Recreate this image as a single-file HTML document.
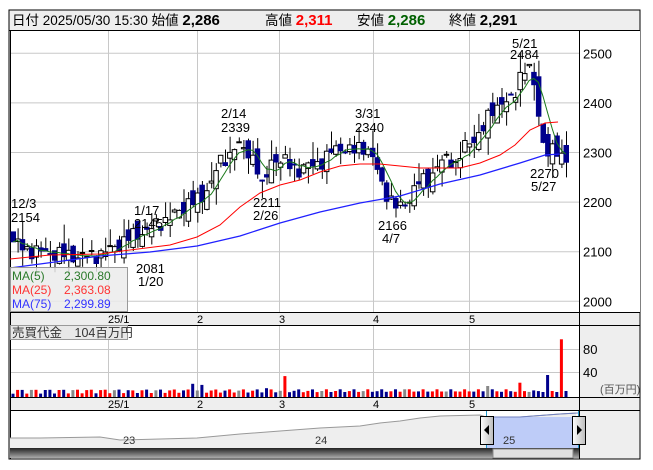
<!DOCTYPE html><html><head><meta charset="utf-8"><style>
body{margin:0;width:653px;height:470px;background:#fff;font-family:"Liberation Sans","Noto Sans CJK JP",sans-serif;overflow:hidden}
</style></head><body>
<svg id="s" width="653" height="470" xmlns="http://www.w3.org/2000/svg" style="position:absolute;left:0;top:0;font-family:'Liberation Sans','Noto Sans CJK JP',sans-serif">
<rect x="9" y="10" width="631" height="449" fill="#eeeeee" stroke="#000"/>
<rect x="10" y="31" width="569" height="281" fill="#fff"/>
<rect x="579" y="31" width="61" height="281" fill="#fff"/>
<rect x="10" y="326" width="569" height="71" fill="#fff"/>
<rect x="10" y="411" width="569" height="37" fill="#fff"/>
<g stroke="#c8c8c8" stroke-width="1" id="grid"></g>
<line x1="9" y1="30.5" x2="640" y2="30.5" stroke="#000"/>
<line x1="10.5" y1="31" x2="10.5" y2="459" stroke="#000"/>
<line x1="579.5" y1="31" x2="579.5" y2="459" stroke="#000"/>
<line x1="10" y1="312.5" x2="640" y2="312.5" stroke="#000"/>
<line x1="10" y1="325.5" x2="640" y2="325.5" stroke="#000"/>
<line x1="10" y1="397.5" x2="640" y2="397.5" stroke="#000"/>
<line x1="10" y1="410.5" x2="640" y2="410.5" stroke="#000"/>
<g id="g"></g>
<text y="25" font-size="13.5"><tspan x="12">日付 2025/05/30 15:30 始値 </tspan><tspan font-weight="bold" font-size="15">2,286</tspan><tspan x="265">高値 </tspan><tspan fill="#f00" font-weight="bold" font-size="15">2,311</tspan><tspan x="357">安値 </tspan><tspan fill="#006000" font-weight="bold" font-size="15">2,286</tspan><tspan x="449">終値 </tspan><tspan font-weight="bold" font-size="15">2,291</tspan></text>
</svg>
<script>
const g=document.getElementById('g'),grid=document.getElementById('grid');
let h='',gh='';
const Y=p=>53.3+(2500-p)*0.496;
[2500,2400,2300,2200,2100,2000].forEach(p=>{gh+=`<line x1="11" x2="579" y1="${Y(p).toFixed(1)}" y2="${Y(p).toFixed(1)}"/>`;});
[108,197,279,373,469].forEach(x=>{gh+=`<line x1="${x}.5" x2="${x}.5" y1="31" y2="312"/><line x1="${x}.5" x2="${x}.5" y1="326" y2="397"/>`;});
[349,372].forEach(y=>{gh+=`<line x1="11" x2="579" y1="${y}.5" y2="${y}.5"/>`;});
grid.innerHTML=gh;
[2500,2400,2300,2200,2100,2000].forEach(p=>{h+=`<text x="583" y="${(Y(p)+5).toFixed(1)}" font-size="13">${p}</text>`;});
h+=`<text x="583" y="354" font-size="13">80</text><text x="583" y="377" font-size="13">40</text><text x="600" y="393" font-size="11" fill="#555">(百万円)</text>`;
[[108,'25/1'],[197,'2'],[279,'3'],[373,'4'],[469,'5']].forEach(([x,t])=>{h+=`<text x="${x}" y="323" font-size="11">${t}</text><text x="${x}" y="408" font-size="11">${t}</text>`;});
const K=[[13,2120],[25,2105],[40,2100],[60,2095],[80,2090],[100,2095],[115,2110],[130,2130],[150,2145],[165,2165],[180,2180],[189,2205],[200,2200],[210,2240],[218,2275],[228,2290],[235,2320],[245,2300],[255,2290],[262,2225],[272,2290],[285,2280],[298,2265],[312,2275],[325,2285],[332,2305],[342,2312],[352,2300],[362,2315],[370,2300],[376,2270],[382,2235],[390,2205],[398,2185],[408,2205],[418,2240],[428,2245],[438,2275],[448,2290],[456,2275],[462,2305],[472,2325],[482,2345],[492,2385],[502,2405],[508,2395],[516,2425],[522,2475],[530,2462],[536,2420],[541,2330],[548,2300],[556,2300],[566,2291]];
function ip(x){for(let i=0;i<K.length-1;i++){if(x<=K[i+1][0]){const [a,b]=K[i],[c,d]=K[i+1];return b+(d-b)*(x-a)/(c-a);}}return K[K.length-1][1];}
const N=121,cl=[],xs=[];
for(let i=0;i<N;i++){const x=13+i*(553/(N-1));xs.push(x);cl.push(ip(x)+Math.sin(i*2.7)*11+Math.sin(i*1.3)*7);}
let vol='';
for(let i=0;i<N;i++){
 const x=xs[i],c=cl[i],o=i?cl[i-1]+Math.sin(i*3.1)*16:2140;
 const hi=Math.max(o,c)+Math.abs(Math.sin(i*5.3))*Math.abs(Math.sin(i*0.7))*40,lo=Math.min(o,c)-Math.abs(Math.sin(i*4.1))*Math.abs(Math.sin(i*0.9))*35;
 const up=c>=o;
 h+=`<line x1="${(x+.5).toFixed(1)}" x2="${(x+.5).toFixed(1)}" y1="${Y(hi).toFixed(1)}" y2="${Y(lo).toFixed(1)}" stroke="#000"/>`;
 const t=Y(Math.max(o,c)),bh=Math.max(1,Math.abs(Y(o)-Y(c)));
 h+=`<rect x="${(x-2).toFixed(1)}" y="${t.toFixed(1)}" width="4.5" height="${bh.toFixed(1)}" fill="${up?'#fff':'#00008c'}" stroke="${up?'#000':'#00008c'}" stroke-width="1"/>`;
 let v=6+Math.abs(Math.sin(i*2.1))*8;
 const big={39:24,41:22,59:38,55:16,110:26,116:40,119:105,103:20,85:14,26:12,113:12};
 if(big[i]!==undefined)v=big[i];
 const vc=i%9==4?'#888':(up?'#f00':'#00008c');
 const vh=v*22/40;
 vol+=`<rect x="${(x-1.5).toFixed(1)}" y="${(397-vh).toFixed(1)}" width="3" height="${vh.toFixed(1)}" fill="${vc}"/>`;
}
h+=vol;
let m5='';for(let i=0;i<N;i++){let s=0,n=0;for(let j=Math.max(0,i-4);j<=i;j++){s+=cl[j];n++;}m5+=`${xs[i].toFixed(1)},${Y(s/n).toFixed(1)} `;}
h+=`<polyline points="${m5}" fill="none" stroke="#1a7a1a" stroke-width="1"/>`;
h+=`<polyline points="10,259 50,255 100,254 130,250 170,245 197,237 220,225 240,207 260,193 280,185 300,180 320,172 340,166 360,164 380,164 400,166 420,168 440,168 460,168 480,163 500,155 515,145 530,130 545,123 558,122" fill="none" stroke="#f00"/>`;
h+=`<polyline points="10,268 100,256 150,252 197,246 240,236 280,223 320,212 360,203 400,196 440,184 480,175 520,163 545,155 560,154" fill="none" stroke="#2020ff" stroke-width="1.3"/>`;
const A=[[11,208,'12/3'],[11,222,'2154'],[134,215,'1/17'],[134,228,'2145'],[136,273,'2081'],[138,286,'1/20'],[221,118,'2/14'],[221,132,'2339'],[253,207,'2211'],[253,220,'2/26'],[355,118,'3/31'],[355,132,'2340'],[378,230,'2166'],[382,243,'4/7'],[512,48,'5/21'],[510,59,'2484'],[530,178,'2270'],[531,191,'5/27']];
A.forEach(([x,y,t])=>{h+=`<text x="${x}" y="${y}" font-size="13">${t}</text>`;});
h+=`<rect x="10.5" y="267.5" width="117" height="44" fill="rgba(235,235,235,0.85)" stroke="#999"/>`;
h+=`<text x="12" y="280" font-size="12" fill="#2a7a2a">MA(5)</text><text x="64" y="280" font-size="12" fill="#2a7a2a">2,300.80</text>`;
h+=`<text x="12" y="294" font-size="12" fill="#f33">MA(25)</text><text x="64" y="294" font-size="12" fill="#f33">2,363.08</text>`;
h+=`<text x="12" y="308" font-size="12" fill="#33f">MA(75)</text><text x="64" y="308" font-size="12" fill="#33f">2,299.89</text>`;
h+=`<rect x="10.5" y="325.5" width="117" height="14" fill="#e8e8e8" stroke="#999"/><text x="12" y="337" font-size="12.5" fill="#333">売買代金　104百万円</text>`;
let np='10,438 40,438 100,437 120,440 160,439 197,438 240,434 280,431 320,428 360,426 380,423 400,421 420,418 440,416 480,415 486,417 520,417 560,414 576,413';
h+=`<polygon points="${np} 576,448 10,448" fill="#eee"/><polyline points="${np}" fill="none" stroke="#999"/>`;
h+=`<rect x="486" y="417" width="92" height="31" fill="#b8c8f8" opacity="0.9"/><polyline points="486,417 520,417 560,414 578,413" fill="none" stroke="#7080c0"/>`;
h+=`<line x1="486.5" x2="486.5" y1="411" y2="448" stroke="#29c"/><line x1="578.5" x2="578.5" y1="411" y2="448" stroke="#29c"/>`;
h+=`<text x="123" y="444" font-size="11" fill="#333">23</text><text x="315" y="444" font-size="11" fill="#333">24</text><text x="503" y="444" font-size="11" fill="#333">25</text>`;
h+=`<defs><linearGradient id="sb" x1="0" y1="0" x2="0" y2="1"><stop offset="0" stop-color="#222"/><stop offset="1" stop-color="#aaa"/></linearGradient><linearGradient id="hd" x1="0" y1="0" x2="1" y2="0"><stop offset="0" stop-color="#fff"/><stop offset="1" stop-color="#bbb"/></linearGradient></defs>`;
h+=`<rect x="10" y="448" width="569" height="10" fill="url(#sb)"/><rect x="493" y="449" width="80" height="9" fill="#e0e0e0" stroke="#888"/>`;
h+=`<rect x="480.5" y="416.5" width="13" height="28" fill="url(#hd)" stroke="#000"/><polygon points="489,425 484,430 489,435" fill="#000"/>`;
h+=`<rect x="572.5" y="416.5" width="13" height="28" fill="url(#hd)" stroke="#000"/><polygon points="577,425 582,430 577,435" fill="#000"/>`;
g.innerHTML=h;
</script>
</body></html>
